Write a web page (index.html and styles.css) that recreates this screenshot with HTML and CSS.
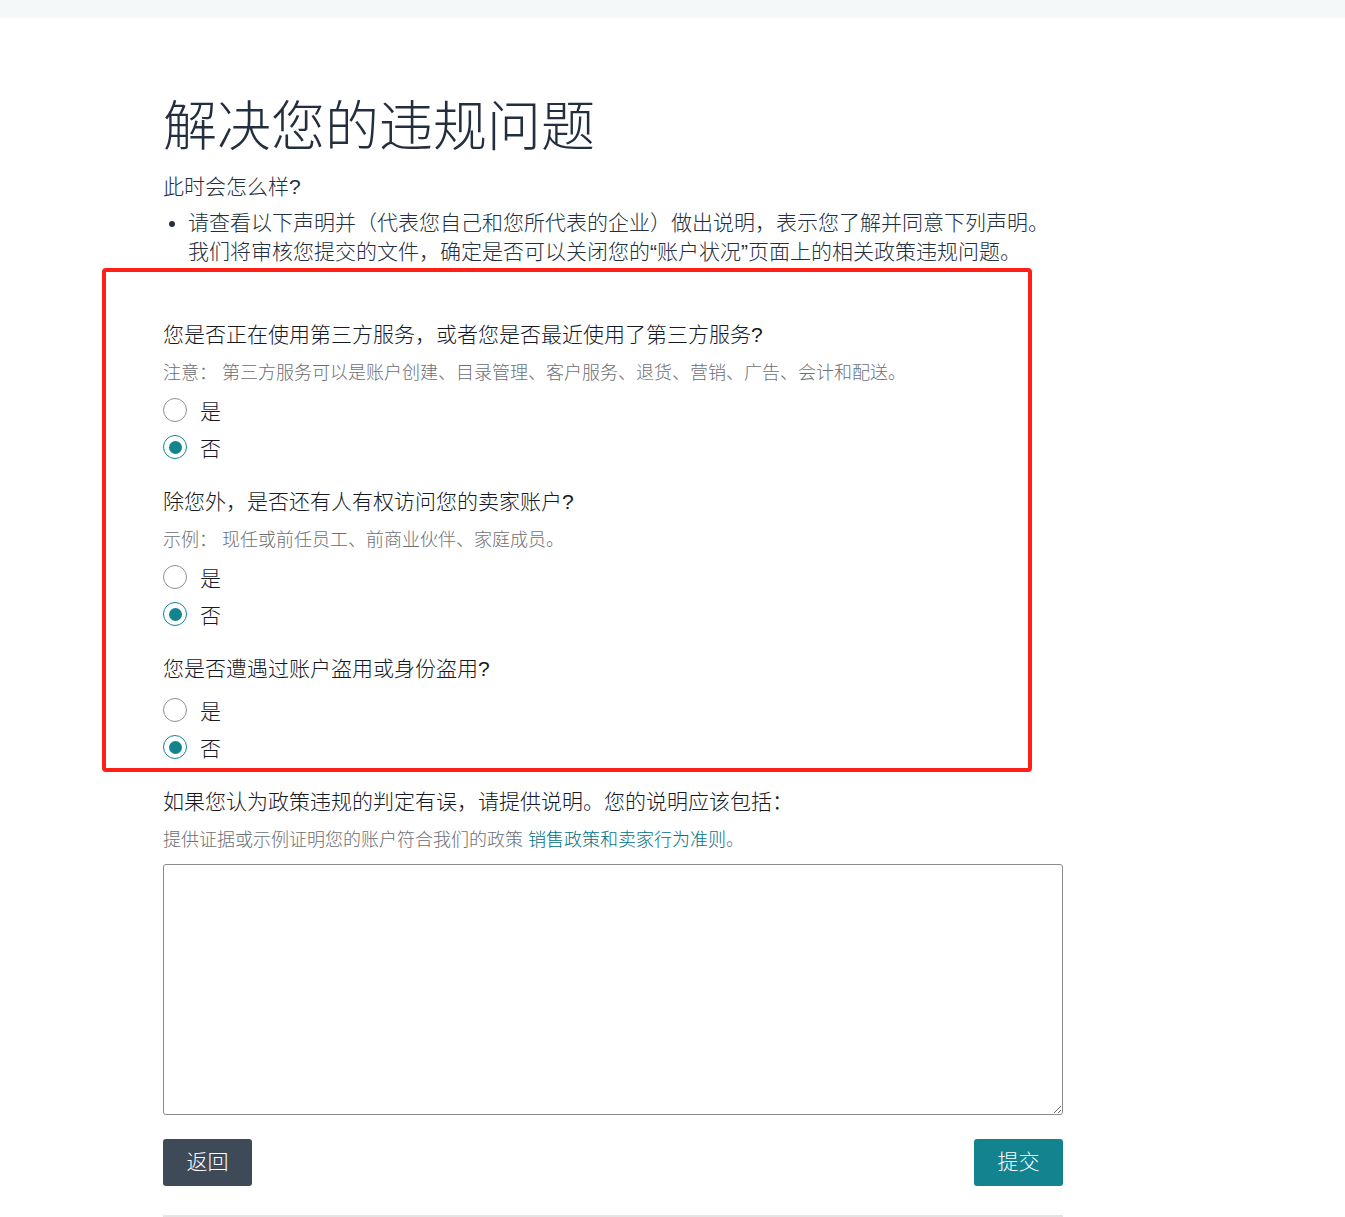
FILE: index.html
```html
<!DOCTYPE html>
<html lang="zh-CN">
<head>
  <meta charset="utf-8"/>
  <title>解决您的违规问题</title>
  <link rel="stylesheet" href="styles.css">
</head>
<body>
  <div class="topbar"></div>

  <div class="page">
    <h1>解决您的违规问题</h1>
    <p class="lead">此时会怎么样?</p>
    <ul class="intro">
      <li>请查看以下声明并（代表您自己和您所代表的企业）做出说明，表示您了解并同意下列声明。<br>我们将审核您提交的文件，确定是否可以关闭您的“账户状况”页面上的相关政策违规问题。</li>
    </ul>

    <div class="questions">
      <div class="question">
        <p class="q-title">您是否正在使用第三方服务，或者您是否最近使用了第三方服务?</p>
        <p class="q-note">注意： 第三方服务可以是账户创建、目录管理、客户服务、退货、营销、广告、会计和配送。</p>
        <label class="radio"><input type="radio" name="q1" value="yes"><span>是</span></label>
        <label class="radio"><input type="radio" name="q1" value="no" checked><span>否</span></label>
      </div>

      <div class="question">
        <p class="q-title">除您外，是否还有人有权访问您的卖家账户?</p>
        <p class="q-note">示例： 现任或前任员工、前商业伙伴、家庭成员。</p>
        <label class="radio"><input type="radio" name="q2" value="yes"><span>是</span></label>
        <label class="radio"><input type="radio" name="q2" value="no" checked><span>否</span></label>
      </div>

      <div class="question no-note">
        <p class="q-title">您是否遭遇过账户盗用或身份盗用?</p>
        <label class="radio"><input type="radio" name="q3" value="yes"><span>是</span></label>
        <label class="radio"><input type="radio" name="q3" value="no" checked><span>否</span></label>
      </div>
    </div>

    <div class="question explain">
      <p class="q-title">如果您认为政策违规的判定有误，请提供说明。您的说明应该包括：</p>
      <p class="q-note">提供证据或示例证明您的账户符合我们的政策 <a href="#">销售政策和卖家行为准则</a>。</p>
      <textarea class="explain-box"></textarea>
    </div>

    <div class="actions">
      <button class="btn btn-back">返回</button>
      <button class="btn btn-submit">提交</button>
    </div>

    <hr class="divider">
  </div>

  <div class="highlight"></div>
</body>
</html>
```

FILE: styles.css
```css
body {
  margin: 0;
  font-family: "Liberation Sans", "Noto Sans CJK SC", sans-serif;
  font-weight: 300;
  color: #16191f;
  background: #fff;
  position: relative;
}
.topbar {
  height: 18px;
  background: #f5f8f9;
}
.page {
  width: 900px;
  margin-left: 163px;
}
h1 {
  margin: 77px 0 0;
  font-size: 54px;
  line-height: 65px;
  font-weight: 300;
  color: #232f3e;
}
.lead {
  margin: 12px 0 0;
  font-size: 21px;
  line-height: 30px;
  color: #232f3e;
}
.intro {
  margin: 6px 0 0;
  padding-left: 25px;
  font-size: 21px;
  line-height: 29px;
  color: #232f3e;
}
.questions {
  margin-top: 54px;
}
.question {
  margin-bottom: 21px;
}
.q-title {
  margin: 0;
  font-size: 21px;
  line-height: 30px;
  color: #16191f;
}
.q-note {
  margin: 10px 0 5px;
  font-size: 18px;
  line-height: 26px;
  color: #6b7075;
}
.no-note .q-title {
  margin-bottom: 7px;
}
.q-note a {
  color: #007185;
  text-decoration: none;
}
.radio {
  display: flex;
  align-items: center;
  gap: 13px;
  height: 37.5px;
  font-size: 21px;
  cursor: pointer;
}
.radio input {
  appearance: none;
  -webkit-appearance: none;
  margin: 0;
  width: 24px;
  height: 24px;
  border: 1px solid #8d9096;
  border-radius: 50%;
  background: #fff;
  display: grid;
  place-content: center;
}
.radio input:checked {
  border: 1.5px solid #12838f;
}
.radio input:checked::before {
  content: "";
  width: 13px;
  height: 13px;
  border-radius: 50%;
  background: #12838f;
}
.explain {
  margin-bottom: 0;
}
.explain .q-note {
  margin-bottom: 11px;
}
.explain-box {
  display: block;
  box-sizing: border-box;
  width: 900px;
  height: 251px;
  margin: 0;
  border: 1px solid #888c8c;
  border-radius: 3px;
  font-family: inherit;
  font-size: 18px;
}
.actions {
  display: flex;
  justify-content: space-between;
  margin-top: 24px;
}
.btn {
  height: 47px;
  width: 89px;
  padding: 0 0 5px;
  border: none;
  border-radius: 3px;
  color: #fff;
  font-family: inherit;
  font-weight: 300;
  font-size: 21px;
  cursor: pointer;
}
.btn-back {
  background: #3f4a59;
}
.btn-submit {
  background: #12838f;
}
.divider {
  margin: 29px 0 0;
  border: none;
  border-top: 2px solid #e3e4e4;
}
.highlight {
  position: absolute;
  left: 102px;
  top: 268px;
  width: 930px;
  height: 504px;
  box-sizing: border-box;
  border: 4px solid #fe2016;
  border-radius: 4px;
  pointer-events: none;
}
```
